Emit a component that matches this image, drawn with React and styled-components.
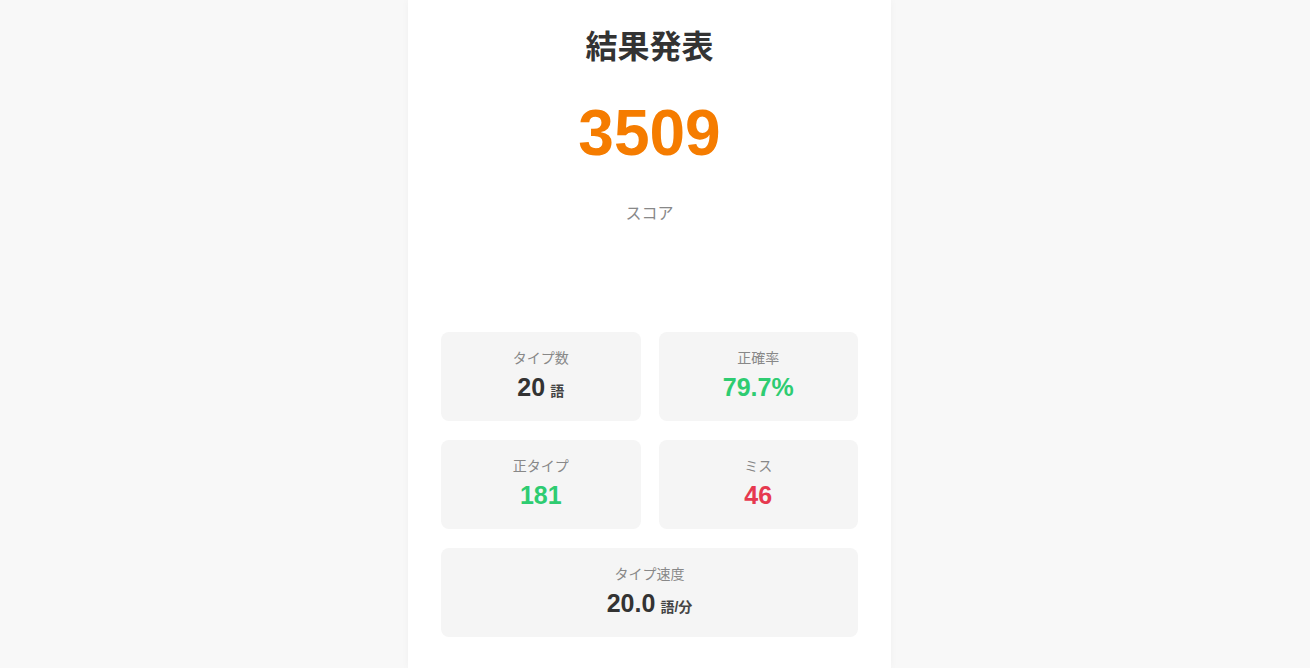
import styled, { createGlobalStyle } from "styled-components";

const GlobalStyle = createGlobalStyle`
  html, body {
    margin: 0;
    padding: 0;
    background-color: #f8f8f8;
    font-family: "Liberation Sans", "Noto Sans CJK JP", sans-serif;
  }
`;

const Page = styled.div`
  min-height: 668px;
  display: flex;
  justify-content: center;
  padding-right: 11px;
`;

const Card = styled.div`
  width: 483px;
  min-height: 668px;
  box-sizing: border-box;
  padding: 28px 33px 30px 33px;
  background-color: #ffffff;
  box-shadow: 0 0 8px rgba(0, 0, 0, 0.035);
  display: flex;
  flex-direction: column;
  align-items: stretch;
`;

const Title = styled.h1`
  margin: 0;
  text-align: center;
  font-size: 32px;
  line-height: 38px;
  font-weight: 700;
  color: #333333;
`;

const Score = styled.div`
  margin-top: 27px;
  text-align: center;
  font-size: 64px;
  line-height: 80px;
  font-weight: 700;
  color: #f57c00;
`;

const ScoreLabel = styled.div`
  margin-top: 30px;
  text-align: center;
  font-size: 16px;
  line-height: 22px;
  color: #888888;
`;

const StatGrid = styled.div`
  margin-top: 107px;
  display: grid;
  grid-template-columns: 1fr 1fr;
  gap: 19px 18px;
`;

const StatBox = styled.div`
  grid-column: ${(p) => (p.$wide ? "1 / span 2" : "auto")};
  height: 89px;
  box-sizing: border-box;
  padding-top: 16px;
  border-radius: 8px;
  background-color: #f5f5f5;
  display: flex;
  flex-direction: column;
  align-items: center;
`;

const StatLabel = styled.div`
  font-size: 14px;
  line-height: 20px;
  color: #888888;
`;

const StatValue = styled.div`
  margin-top: 4px;
  font-size: 25px;
  line-height: 30px;
  font-weight: 700;
  color: ${(p) => p.$color || "#333333"};
`;

const Unit = styled.span`
  margin-left: 5px;
  font-size: 14px;
  font-weight: 700;
  color: #444444;
`;

const stats = [
  { label: "タイプ数", value: "20", unit: "語" },
  { label: "正確率", value: "79.7%", color: "#2ecc71" },
  { label: "正タイプ", value: "181", color: "#2ecc71" },
  { label: "ミス", value: "46", color: "#e6394f" },
  { label: "タイプ速度", value: "20.0", unit: "語/分", wide: true },
];

export default function App() {
  return (
    <>
      <GlobalStyle />
      <Page>
        <Card>
          <Title>結果発表</Title>
          <Score>3509</Score>
          <ScoreLabel>スコア</ScoreLabel>
          <StatGrid>
            {stats.map((s) => (
              <StatBox key={s.label} $wide={s.wide}>
                <StatLabel>{s.label}</StatLabel>
                <StatValue $color={s.color}>
                  {s.value}
                  {s.unit && <Unit>{s.unit}</Unit>}
                </StatValue>
              </StatBox>
            ))}
          </StatGrid>
        </Card>
      </Page>
    </>
  );
}
